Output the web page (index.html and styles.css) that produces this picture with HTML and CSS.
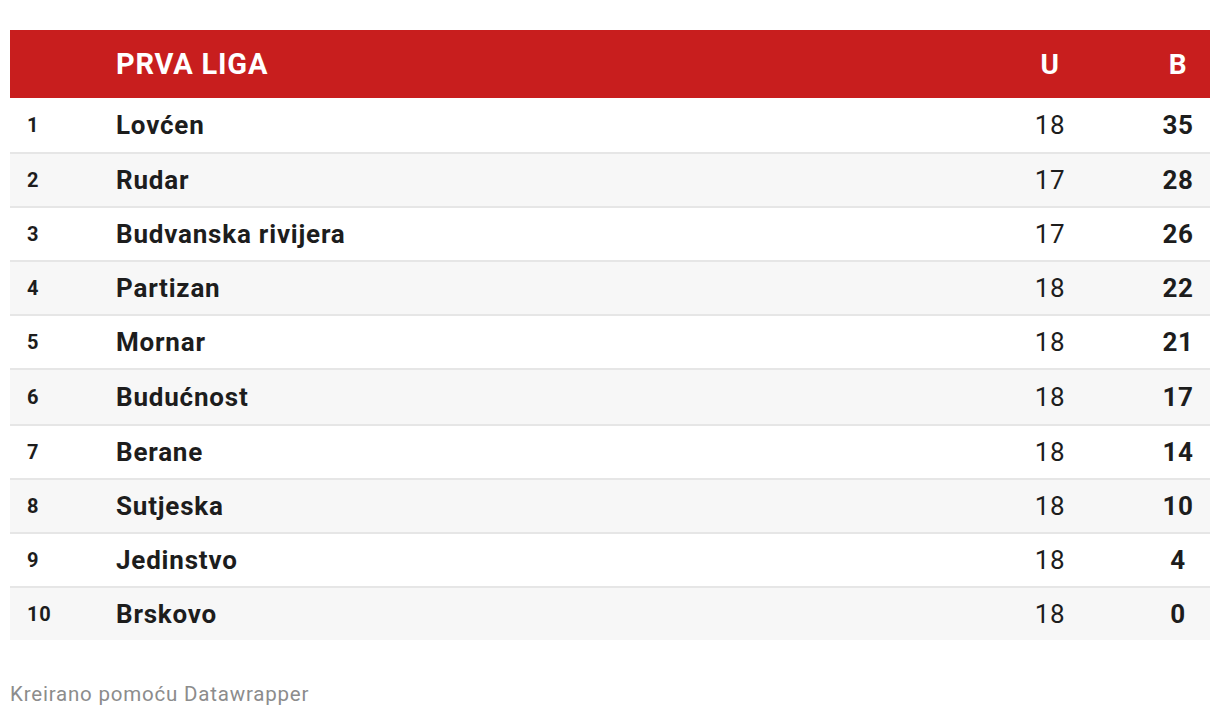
FILE: index.html
```html
<!DOCTYPE html>
<html lang="sr">
<head>
<meta charset="utf-8">
<title>Prva liga</title>
<link rel="stylesheet" href="styles.css">
</head>
<body>
<div class="chart">
  <div class="table">
    <div class="row head">
      <div class="c-rank"></div>
      <div class="c-team">PRVA LIGA</div>
      <div class="c-u">U</div>
      <div class="c-b">B</div>
    </div>
    <div class="row tall"><div class="c-rank">1</div><div class="c-team">Lovćen</div><div class="c-u">18</div><div class="c-b">35</div></div>
    <div class="row alt"><div class="c-rank">2</div><div class="c-team">Rudar</div><div class="c-u">17</div><div class="c-b">28</div></div>
    <div class="row"><div class="c-rank">3</div><div class="c-team">Budvanska rivijera</div><div class="c-u">17</div><div class="c-b">26</div></div>
    <div class="row alt"><div class="c-rank">4</div><div class="c-team">Partizan</div><div class="c-u">18</div><div class="c-b">22</div></div>
    <div class="row"><div class="c-rank">5</div><div class="c-team">Mornar</div><div class="c-u">18</div><div class="c-b">21</div></div>
    <div class="row alt tall"><div class="c-rank">6</div><div class="c-team">Budućnost</div><div class="c-u">18</div><div class="c-b">17</div></div>
    <div class="row"><div class="c-rank">7</div><div class="c-team">Berane</div><div class="c-u">18</div><div class="c-b">14</div></div>
    <div class="row alt"><div class="c-rank">8</div><div class="c-team">Sutjeska</div><div class="c-u">18</div><div class="c-b">10</div></div>
    <div class="row"><div class="c-rank">9</div><div class="c-team">Jedinstvo</div><div class="c-u">18</div><div class="c-b">4</div></div>
    <div class="row alt"><div class="c-rank">10</div><div class="c-team">Brskovo</div><div class="c-u">18</div><div class="c-b">0</div></div>
  </div>
  <div class="footer">Kreirano pomoću Datawrapper</div>
</div>
</body>
</html>
```
FILE: styles.css
```css
* { box-sizing: border-box; }
html, body { margin: 0; padding: 0; background: #ffffff; }
body {
  font-family: Roboto, "Liberation Sans", Arial, sans-serif;
  color: #1d1d1d;
  letter-spacing: 0.05em;
}
.chart {
  padding: 30px 10px 0 10px;
}
.table {
  display: flex;
  flex-direction: column;
  width: 1200px;
}
.row {
  display: grid;
  grid-template-columns: 106px 1fr 128px 128px;
  align-items: center;
  height: 54px;
  background: #ffffff;
  border-top: 2px solid #e6e6e6;
}
.row.tall { height: 56px; }
.row.alt { background: #f7f7f7; }
.row.head {
  height: 68px;
  background: #c81e1e;
  color: #ffffff;
  border-top: none;
  font-weight: 700;
}
.row.head + .row { border-top: none; height: 54px; }
.c-rank {
  padding-left: 17px;
  font-size: 20px;
  font-weight: 700;
}
.c-team {
  font-size: 26px;
  font-weight: 700;
}
.c-u, .c-b {
  padding-left: 64px;
  text-align: center;
  font-size: 26px;
  letter-spacing: 0.02em;
}
.c-u { font-weight: 400; }
.c-b { font-weight: 700; }
.row.head .c-team { font-size: 29px; }
.row.head .c-u, .row.head .c-b { font-weight: 700; font-size: 28px; }
.footer {
  margin-top: 42px;
  font-size: 20.5px;
  color: #8c8c8c;
}
```
